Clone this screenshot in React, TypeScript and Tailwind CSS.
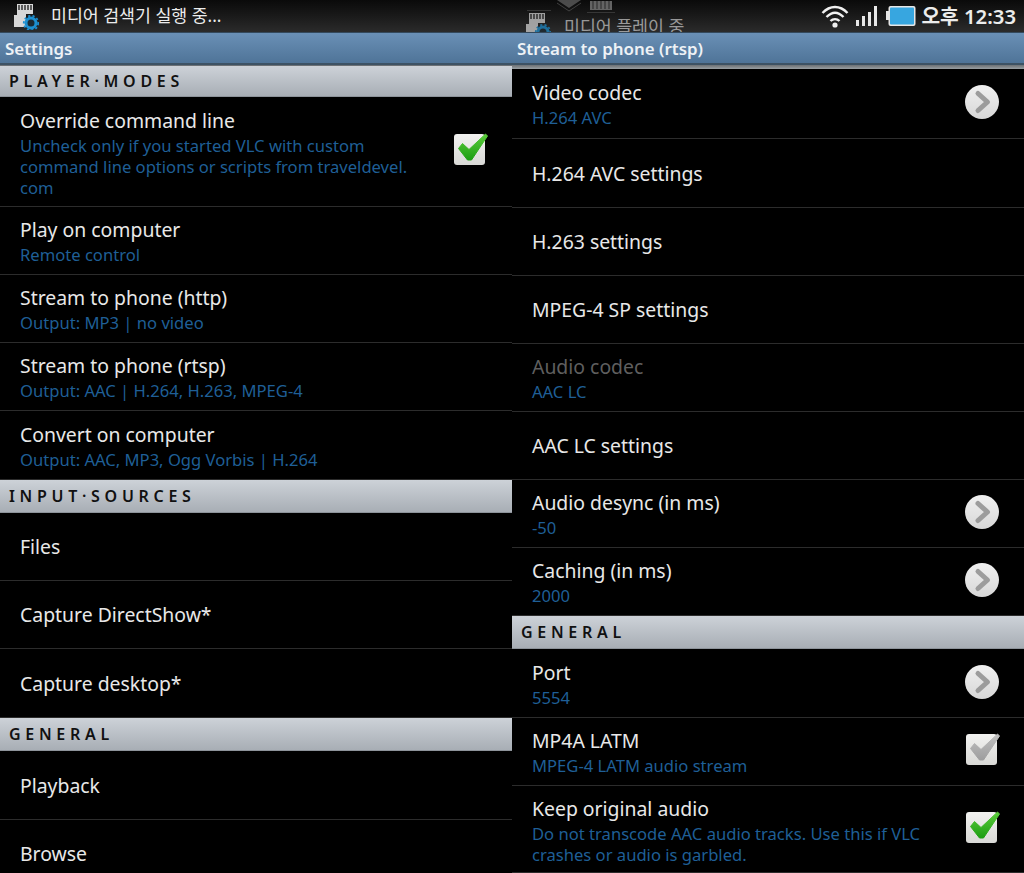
import React from "react";

const FONT = "font-['Noto_Sans','Noto_Sans_CJK_KR',sans-serif]";

function Header({ children, h = "h-[33px]" }: { children: string; h?: string }) {
  return (
    <div className={`${h} shrink-0 flex items-center pl-[9px] bg-gradient-to-b from-[#cdd2d8] to-[#a8aeb5] border-b border-[#8d939a] text-[#111] text-[16px] font-semibold tracking-[4.7px] leading-none`}>
      {children}
    </div>
  );
}

function Arrow() {
  return (
    <svg width="36" height="36" viewBox="0 0 36 36" className="shrink-0 mb-[3px]">
      <defs>
        <linearGradient id="arrowFill" x1="0" y1="0" x2="0" y2="1">
          <stop offset="0" stopColor="#f0f0f0" />
          <stop offset="1" stopColor="#d8d8d8" />
        </linearGradient>
      </defs>
      <circle cx="18" cy="18" r="17" fill="url(#arrowFill)" />
      <path d="M14 9.5 L23.5 18 L14 26.5" fill="none" stroke="#9c9c9c" strokeWidth="5" strokeLinejoin="round" strokeLinecap="round" />
    </svg>
  );
}

function Check({ green }: { green: boolean }) {
  const id = green ? "checkGreen" : "checkGray";
  return (
    <svg width="36" height="36" viewBox="0 0 36 36" className="shrink-0 mb-[3px]">
      <defs>
        <linearGradient id={id} x1="0" y1="0" x2="0" y2="1">
          <stop offset="0" stopColor={green ? "#5ccc3c" : "#c0c0c0"} />
          <stop offset="1" stopColor={green ? "#1c9e12" : "#9e9e9e"} />
        </linearGradient>
        <linearGradient id={`${id}Box`} x1="0" y1="0" x2="0" y2="1">
          <stop offset="0" stopColor="#f2f2f0" />
          <stop offset="1" stopColor="#d9d9d6" />
        </linearGradient>
      </defs>
      <rect x="2" y="2" width="31" height="31" rx="3" fill={`url(#${id}Box)`} />
      <path d="M6.5 16.5 L10.5 11.5 L17 17.5 L33.5 2 L35.5 4 L19.5 28 L15.5 28 Z" fill={`url(#${id})`} stroke={`url(#${id})`} strokeWidth="1" strokeLinejoin="round" />
    </svg>
  );
}

type RowP = {
  title: string;
  sub?: string[];
  right?: "arrow" | "on" | "off";
  h: string;
  dim?: boolean;
  tall?: boolean;
};

function Row({ title, sub, right, h, dim, tall }: RowP) {
  return (
    <div className={`${h} shrink-0 flex items-center border-b border-[#2c2c2c] pl-[20px] pr-[24px]`}>
      <div className={`flex-1 min-w-0 ${tall ? "pt-[1px]" : ""}`}>
        <div className={`text-[19.4px] leading-[27px] ${sub ? "mb-px" : ""} ${dim ? "text-[#5f5f5f]" : "text-[#e8e8e8]"}`}>{title}</div>
        {sub?.map((s) => (
          <div key={s} className="text-[16.6px] leading-[21px] text-[#1f5f96] whitespace-nowrap">{s}</div>
        ))}
      </div>
      {right === "arrow" && <Arrow />}
      {right === "on" && <Check green />}
      {right === "off" && <Check green={false} />}
    </div>
  );
}

function TitleBar({ children }: { children: string }) {
  return (
    <div className="h-[33px] shrink-0 flex items-center pl-[5px] pt-[2px] bg-gradient-to-b from-[#6a90b6] to-[#4f7498] border-t border-[#34495c] border-b-2 border-b-[#3d5264] text-[#eef2f6] text-[16.9px] font-semibold leading-none">
      {children}
    </div>
  );
}

function SdIcon() {
  return (
    <svg width="26" height="28" viewBox="0 0 26 28" className="shrink-0">
      <path d="M1 13 H4 V2 H20 V12 H13 V25 H1 Z" fill="#d8d8d8" />
      <path d="M6 3 V8 M9 3 V8 M12 3 V8 M15 3 V8 M18 3 V8" stroke="#333" strokeWidth="1.5" />
      <circle cx="18" cy="21" r="5" fill="#1b2a33" stroke="#1c8fd0" strokeWidth="3" />
      <circle cx="18" cy="21" r="7.2" fill="none" stroke="#1c8fd0" strokeWidth="1.8" strokeDasharray="2.2 2.2" />
    </svg>
  );
}

function StatusIcons() {
  return (
    <div className="flex items-center">
      <svg width="28" height="24" viewBox="0 0 28 24" className="mr-[6px]">
        <path d="M1.5 9 C9 1 19 1 26.5 9 M5.5 13 C11 7.5 17 7.5 22.5 13 M9.5 17 C12 14.5 16 14.5 18.5 17" fill="none" stroke="#f0f0f0" strokeWidth="2.4" />
        <circle cx="14" cy="21" r="2.6" fill="#f0f0f0" />
      </svg>
      <svg width="26" height="22" viewBox="0 0 26 22" className="mr-[5px]">
        <rect x="1" y="15" width="3" height="6" fill="#e8e8e8" />
        <rect x="7" y="11" width="3" height="10" fill="#e8e8e8" />
        <rect x="13" y="7" width="3" height="14" fill="#e8e8e8" />
        <rect x="19" y="1" width="3" height="20" fill="#e8e8e8" />
      </svg>
      <svg width="30" height="22" viewBox="0 0 30 22">
        <rect x="0" y="6" width="3" height="9" fill="#e6e6e6" />
        <rect x="2.5" y="1" width="27" height="20" rx="2" fill="#e6e6e6" />
        <rect x="4" y="2.5" width="24" height="17" rx="1" fill="#37a6e0" />
      </svg>
    </div>
  );
}

function GhostNotification() {
  return (
    <div className="absolute inset-0 opacity-70">
      <svg width="110" height="14" viewBox="0 0 110 14" className="absolute left-[15px] top-0">
        <path d="M30 0 L42 8 L54 0 Z" fill="#666" />
        <path d="M30 3 L42 11 L54 3" fill="none" stroke="#555" strokeWidth="1" />
        <path d="M63 10 V1 H85 V10 Z" fill="#888" />
        <path d="M66 1 V9 M70 1 V9 M74 1 V9 M78 1 V9 M82 1 V9" stroke="#333" strokeWidth="1" />
        <path d="M60 12.5 H88 M0 10.5 H24" stroke="#444" strokeWidth="1" />
      </svg>
      <div className="absolute left-[13px] top-[11px]">
        <SdIcon />
      </div>
      <span className="absolute left-[52px] top-[18px] text-[#cccccc] text-[17.3px] leading-none whitespace-nowrap">미디어 플레이 중</span>
    </div>
  );
}

export default function App() {
  return (
    <div className={`w-[1024px] h-[873px] overflow-hidden bg-black flex ${FONT}`}>
      <div className="w-[512px] h-full flex flex-col overflow-hidden">
        <div className="h-[32px] shrink-0 flex items-center bg-gradient-to-b from-[#0a0a0a] to-[#2b2b2b] pl-[13px] gap-[12px]">
          <SdIcon />
          <span className="text-[#ececec] text-[17.3px] leading-none">미디어 검색기 실행 중...</span>
        </div>
        <TitleBar>Settings</TitleBar>
        <div className="h-px shrink-0 bg-[#6b7074]" />
        <Header h="h-[31px] pb-px">{"PLAYER·MODES"}</Header>
        <Row h="h-[110px]" tall title="Override command line" right="on" sub={["Uncheck only if you started VLC with custom", "command line options or scripts from traveldevel.", "com"]} />
        <Row h="h-[68px]" title="Play on computer" sub={["Remote control"]} />
        <Row h="h-[68px]" title="Stream to phone (http)" sub={["Output: MP3 | no video"]} />
        <Row h="h-[68px]" title="Stream to phone (rtsp)" sub={["Output: AAC | H.264, H.263, MPEG-4"]} />
        <Row h="h-[69px]" title="Convert on computer" sub={["Output: AAC, MP3, Ogg Vorbis | H.264"]} />
        <Header>{"INPUT·SOURCES"}</Header>
        <Row h="h-[68px]" title="Files" />
        <Row h="h-[68px]" title="Capture DirectShow*" />
        <Row h="h-[69px]" title="Capture desktop*" />
        <Header>GENERAL</Header>
        <Row h="h-[69px]" title="Playback" />
        <Row h="h-[68px]" title="Browse" />
      </div>
      <div className="w-[512px] h-full flex flex-col overflow-hidden">
        <div className="h-[32px] shrink-0 flex items-center justify-end bg-gradient-to-b from-[#0a0a0a] to-[#2b2b2b] pr-[8px] gap-[5px] relative overflow-hidden">
          <GhostNotification />
          <div className="relative flex items-center gap-[5px]">
            <StatusIcons />
            <span className="text-[#ececec] text-[20.3px] font-semibold leading-none">오후 12:33</span>
          </div>
        </div>
        <TitleBar>Stream to phone (rtsp)</TitleBar>
        <div className="h-[4px] shrink-0 bg-gradient-to-b from-[#6b7074] to-[#9aa0a4]" />
        <Row h="h-[70px]" title="Video codec" sub={["H.264 AVC"]} right="arrow" />
        <Row h="h-[69px]" title="H.264 AVC settings" />
        <Row h="h-[68px]" title="H.263 settings" />
        <Row h="h-[68px]" title="MPEG-4 SP settings" />
        <Row h="h-[68px]" dim title="Audio codec" sub={["AAC LC"]} />
        <Row h="h-[68px]" title="AAC LC settings" />
        <Row h="h-[68px]" title="Audio desync (in ms)" sub={["-50"]} right="arrow" />
        <Row h="h-[68px]" title="Caching (in ms)" sub={["2000"]} right="arrow" />
        <Header>GENERAL</Header>
        <Row h="h-[69px]" title="Port" sub={["5554"]} right="arrow" />
        <Row h="h-[68px]" title="MP4A LATM" sub={["MPEG-4 LATM audio stream"]} right="off" />
        <Row h="h-[87px]" tall title="Keep original audio" sub={["Do not transcode AAC audio tracks. Use this if VLC", "crashes or audio is garbled."]} right="on" />
      </div>
    </div>
  );
}
